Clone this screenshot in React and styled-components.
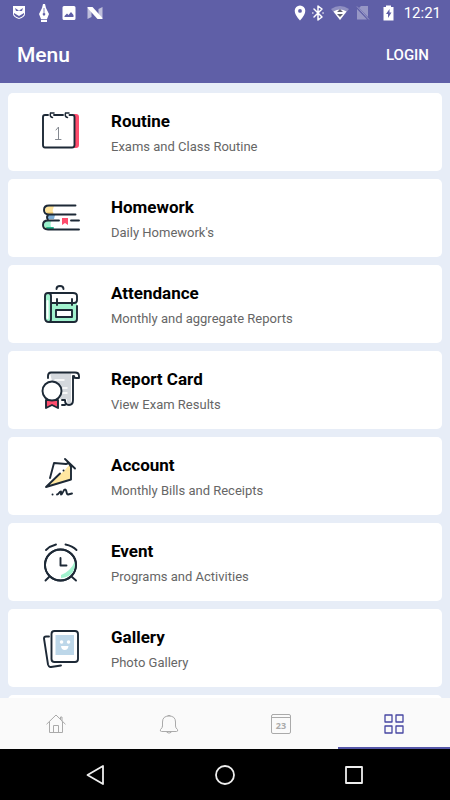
import React, { useState } from "react";
import styled, { createGlobalStyle } from "styled-components";

const GlobalStyle = createGlobalStyle`
  * {
    box-sizing: border-box;
  }

  body {
    margin: 0;
    font-family: Roboto, "Liberation Sans", sans-serif;
    background: #e7edf7;
  }

  button {
    padding: 0;
    border: 0;
    background: none;
    font-family: inherit;
    cursor: pointer;
  }
`;

const Screen = styled.div`
  display: flex;
  flex-direction: column;
  height: 100vh;
`;

const Header = styled.header`
  flex: none;
  background: #5f5fa7;
  color: #fff;
`;

const StatusBar = styled.div`
  display: flex;
  align-items: center;
  justify-content: space-between;
  height: 26px;
  padding: 0 9px 0 11px;
`;

const StatusGroup = styled.div`
  display: flex;
  align-items: center;
  gap: ${({ $gap }) => $gap}px;
`;

const Clock = styled.time`
  font-size: 15px;
  line-height: 18px;
`;

const TitleBar = styled.div`
  display: flex;
  align-items: center;
  justify-content: space-between;
  height: 57px;
  padding: 0 21px 0 17px;
`;

const Title = styled.h1`
  margin: 0;
  font-size: 21px;
  line-height: 24px;
  font-weight: 500;
`;

const Login = styled.button`
  color: #fff;
  font-size: 15px;
  line-height: 24px;
  font-weight: 500;
`;

const List = styled.main`
  flex: 1;
  min-height: 0;
  overflow: hidden;
  display: flex;
  flex-direction: column;
  gap: 8px;
  padding: 10px 8px 0;
`;

const Card = styled.a`
  flex: none;
  display: flex;
  align-items: center;
  gap: 31px;
  height: 78px;
  padding: 0 32px;
  border-radius: 5px;
  background: #fff;
  text-decoration: none;
`;

const CardBody = styled.div`
  padding-top: 4px;
`;

const CardTitle = styled.h2`
  margin: 0;
  font-size: 17px;
  line-height: 26px;
  font-weight: 700;
  color: #000;
`;

const CardText = styled.p`
  margin: 0;
  font-size: 13px;
  line-height: 26px;
  color: #666;
`;

const Tabs = styled.nav`
  flex: none;
  display: grid;
  grid-template-columns: repeat(4, 1fr);
  height: 51px;
  background: #fafafa;
`;

const Tab = styled.button`
  display: flex;
  align-items: center;
  justify-content: center;
  border-top: 2px solid transparent;
  border-bottom: 2px solid ${({ $active }) => ($active ? "#5456a8" : "transparent")};
  color: ${({ $active }) => ($active ? "#4747a3" : "#aaa")};
`;

const SystemBar = styled.div`
  flex: none;
  display: flex;
  align-items: center;
  justify-content: center;
  gap: 105px;
  height: 51px;
  background: #000;
  color: #eee;
`;

const SystemButton = styled.button`
  display: flex;
  color: inherit;
`;

const Line = styled.svg`
  display: block;
  flex: none;
  fill: none;
  stroke: ${({ $color }) => $color || "currentColor"};
  stroke-width: ${({ $weight }) => $weight || 1}px;
  stroke-linecap: round;
  stroke-linejoin: round;
`;

const Solid = styled.svg`
  display: block;
  flex: none;
  fill: currentColor;
`;

/* Card drawings share one 60 unit canvas, top is where the 40 unit window starts */
const Drawing = ({ top, children }) => (
  <Line width="40" height="40" viewBox={`10 ${top} 40 40`} $color="#1d2936" $weight={1.9} aria-hidden="true">
    {children}
  </Line>
);

const RoutineIcon = () => (
  <Drawing top={12}>
    <path d="M43 14h3q3 0 3 3v28q0 3-3 3h-5q3 0 3-3V17q0-3-1-3z" fill="#ff4d6d" stroke="none" />
    <path d="M18 15h-3q-2 0-2 2v28q0 2.500 2 2.500h27q2.500 0 2.500-2.500V17q0-2-2-2h-3M24 15h9" />
    <path d="M20.500 13q-1 4 2 4.500M21 13h3M35.500 13q-1 4 2 4.500M36 13h3" strokeWidth="1.5" />
    <path d="M26 30l2.500-3v12.500M25.500 39.500h5.500" stroke="#858a91" strokeWidth="1" />
  </Drawing>
);

const HomeworkIcon = () => (
  <Drawing top={11}>
    <path d="M24 19h-5q-4 1-4 4t4 4h4q-1-4 1-8z" fill="#ffe49b" stroke="none" />
    <path d="M25 28h-7v4h6z" fill="#7daed6" stroke="none" />
    <path d="M22 33h-5q-4 1-4 5t4 4h5q-3-5 0-9z" fill="#9bf1cd" stroke="none" />
    <path d="M17 26h6M15 41h7" stroke="#e7b853" strokeWidth="1" />
    <path d="M17 41h6" stroke="#24b58b" strokeWidth="2" />
    <path d="M45.500 18.500H19q-5 0-5 4.500t5 4.500h26.500M18 28q-2 2 0 5M29 33.500H18q-5 0-5 4.500t5 4.500h31M41 33.500h8" />
    <path d="M32 31h6v7l-3-2-3 2z" fill="#ff4d6d" stroke="none" />
  </Drawing>
);

const AttendanceIcon = () => (
  <Drawing top={11}>
    <path d="M15 21h5v27h-3q-2 0-2-3zM21 30h26v15q0 3-2 3H21z" fill="#a2f3cf" stroke="none" />
    <path d="M17.500 28v17" stroke="#fff" strokeWidth="2" />
    <path d="M26.500 16q0-3 3.500-3t3.500 3" />
    <path d="M18 20h25q4 0 4 3v4q0 3-3 3H22M21 30V23q0-3-3-3t-3 3v22q0 4 4 4h25q3 0 3-3V33M21 30v16q0 3-2 3" />
    <path d="M27 26v6M42 26v6" />
    <path d="M26 37h16v7H26z" fill="#fff" />
  </Drawing>
);

const ReportIcon = () => (
  <Drawing top={10}>
    <path d="M20 13h21v29q0 3 2 3h-3q-3 0-3-6h-7V25l-8-4z" fill="#d4d8dd" stroke="none" />
    <path d="M25 20h9M33 28h4M33 33h4" stroke="#fff" strokeWidth="1.5" />
    <path d="M18 18v-2q0-3.500 3-3.500h24q4 0 4 3.500v2h-3q-2 0-2-2M43 16v24q0 5-4 5t-4-5h-3M35 45h-3" />
    <path d="M16 40v8l6-3 6 3v-8z" fill="#ff4d6d" />
    <circle cx="22" cy="31" r="9.500" fill="#fff" />
  </Drawing>
);

const AccountIcon = () => (
  <Drawing top={10}>
    <path d="M40 18l-6 7-18 16 25-8V20z" fill="#ffe7a0" stroke="none" />
    <path d="M33 24.500L16 41l4.500-9 4-15 12 1L33 24.500z" fill="#fff" stroke="none" />
    <path d="M20 32l4-15 12 1 3-1 2 4v12.500l-25 7.500 14-13.500M35 13l10 9.500M33.500 24.500h.1" />
    <path d="M22.500 48.500h.1M27 48.500c2 0 2-3 4-3v3c2 0 2-5 4-5s1 5 3 5l4-1" />
  </Drawing>
);

const EventIcon = () => (
  <Drawing top={10}>
    <circle cx="30.500" cy="33" r="15.500" fill="#fff" />
    <path d="M45 29q1 16-14 17V43q10-4 14-14z" fill="#a2f3cf" stroke="none" />
    <circle cx="30.500" cy="33" r="15.500" />
    <path d="M30.500 26v7.500h6M16 18q4-4 10-5.500M35.500 12.500q7 1.500 11 5.500M19 45l-3.500 3.500M42 45l4 3.500" />
  </Drawing>
);

const GalleryIcon = () => (
  <Drawing top={10}>
    <path d="M19 18.500h-3q-2 0-2 2l4 26q1 3 3 2.500l10-1.500" />
    <rect x="21.500" y="13" width="26.500" height="31" rx="3" fill="#fff" />
    <path d="M25.500 17h18.500v20H25.500z" fill="#bdd7e9" stroke="none" />
    <path d="M31.500 24h.1M38.500 24h.1" stroke="#fff" strokeWidth="3.5" />
    <path d="M31 28h7.500q-.5 4-3.800 4T31 28z" fill="#fff" stroke="none" />
  </Drawing>
);

const HomeIcon = () => (
  <Line width="20" height="20" viewBox="0 0 20 20">
    <path d="M.8 10L10 1l9.200 9M3.500 8v10.500h13V8M7.500 18.500v-7h5v7M14.500 5.500V3h1.500v4" />
  </Line>
);

const BellIcon = () => (
  <Line width="20" height="20" viewBox="0 0 20 20">
    <path d="M9 1.500h2M3.500 12V8q0-6 6.500-6t6.500 6v4q0 2 2 3.500.8 2-1 2h-15q-1.800 0-1-2 2-1.500 2-3.500zM8 18.500q2 1.500 4 0" />
  </Line>
);

const CalendarText = styled.text`
  fill: currentColor;
  stroke: none;
  font: 700 9px "Open Sans", sans-serif;
  text-anchor: middle;
`;

const CalendarIcon = () => (
  <Line width="20" height="20" viewBox="0 0 20 20">
    <rect x=".5" y=".5" width="19" height="19" rx="1.500" />
    <path d="M1 3.500h18" />
    <CalendarText x="10" y="15">23</CalendarText>
  </Line>
);

const GridIcon = () => (
  <Line width="20" height="20" viewBox="0 0 20 20" $weight={1.3}>
    <path d="M1 1h7v7H1zM12 1h7v7h-7zM1 12h7v7H1zM12 12h7v7h-7z" />
  </Line>
);

const items = [
  { title: "Routine", text: "Exams and Class Routine", Icon: RoutineIcon },
  { title: "Homework", text: "Daily Homework's", Icon: HomeworkIcon },
  { title: "Attendance", text: "Monthly and aggregate Reports", Icon: AttendanceIcon },
  { title: "Report Card", text: "View Exam Results", Icon: ReportIcon },
  { title: "Account", text: "Monthly Bills and Receipts", Icon: AccountIcon },
  { title: "Event", text: "Programs and Activities", Icon: EventIcon },
  { title: "Gallery", text: "Photo Gallery", Icon: GalleryIcon },
];

const tabs = [
  { name: "Home", Icon: HomeIcon },
  { name: "Notifications", Icon: BellIcon },
  { name: "Calendar", Icon: CalendarIcon },
  { name: "Menu", Icon: GridIcon },
];

const Status = () => (
  <StatusBar>
    <StatusGroup $gap={10}>
      <Solid width="16" height="18" viewBox="0 0 16 18">
        <path fillRule="evenodd" d="M2 2h12v8q0 3-6 5-6-2-6-5zM4 4l1 3h2l1-1 1 1h2l1-3-3 2H7zM3 9v1.500q1 2 5 3.500 4-1.500 5-3.500V9l-5 3z" />
        <path d="M4 8h8v1l-4 2-4-2z" opacity=".6" />
      </Solid>
      <Solid width="14" height="20" viewBox="0 0 14 20">
        <path fillRule="evenodd" d="M6 1h2l1 4 3 6-2 5H4l-2-5 3-6zM6.600 5v5a1.300 1.300 0 1 0 .8 0V5zM4 16.800h6V19H4z" />
      </Solid>
      <Solid width="16" height="18" viewBox="0 0 16 18">
        <path fillRule="evenodd" d="M3 2h10q1.500 0 1.500 1.500v11Q14.500 16 13 16H3q-1.500 0-1.500-1.500v-11Q1.500 2 3 2zM3.500 13h9V11L10 8l-2.500 3L6 9.500 3.500 12z" />
      </Solid>
      <Solid width="16" height="18" viewBox="0 0 16 18">
        <path d="M.5 4v11l4-2V6zM15.500 14V3l-4 2v7z" opacity=".6" />
        <path d="M.5 3h5l10 11v1h-5L.5 4z" />
      </Solid>
    </StatusGroup>
    <StatusGroup $gap={6}>
      <Solid width="12" height="18" viewBox="0 0 12 18">
        <path fillRule="evenodd" d="M6 1.500a5.300 5.300 0 0 1 5.300 5.300Q11.300 11 6 16.500.7 11 .7 6.800A5.300 5.300 0 0 1 6 1.500zM6 5a1.900 1.900 0 1 0 0 3.800A1.900 1.900 0 0 0 6 5z" />
      </Solid>
      <Line width="12" height="18" viewBox="0 0 12 18" $weight={1.5}>
        <path d="M2 5l8 8-4 3V2l4 3-8 8M.8 9h.1M11 9h.1" />
      </Line>
      <Solid width="20" height="18" viewBox="0 0 20 18">
        <path d="M1 5q9-6 18 0l-9 11z" opacity=".3" />
        <path d="M3.500 7.500q6.500-4 13 0L10 16z" />
        <path d="M7 8l3-3 3 3zM7 10h6l-3 3z" fill="#5d5d70" />
      </Solid>
      <Solid width="14" height="18" viewBox="0 0 14 18" opacity=".35">
        <path d="M5 2h7v11L3 4zM1 5l10 10.500H1z" />
        <path d="M1 2.500l12 13" stroke="currentColor" strokeWidth="1" />
      </Solid>
      <Solid width="22" height="18" viewBox="-2 0 22 18">
        <path fillRule="evenodd" d="M8 1.500h5V3h2.500v13.500h-10V3H8zM11.500 5L8 10h2v4l3.500-5.500h-2z" />
      </Solid>
      <Clock>12:21</Clock>
    </StatusGroup>
  </StatusBar>
);

const App = () => {
  const [active, setActive] = useState("Menu");

  return (
    <Screen>
      <GlobalStyle />
      <Header>
        <Status />
        <TitleBar>
          <Title>Menu</Title>
          <Login type="button">LOGIN</Login>
        </TitleBar>
      </Header>
      <List>
        {items.map(({ title, text, Icon }) => (
          <Card key={title} href={`#${title.toLowerCase().replace(" ", "-")}`}>
            <Icon />
            <CardBody>
              <CardTitle>{title}</CardTitle>
              <CardText>{text}</CardText>
            </CardBody>
          </Card>
        ))}
        <Card as="div" aria-hidden="true" />
      </List>
      <Tabs>
        {tabs.map(({ name, Icon }) => (
          <Tab key={name} type="button" aria-label={name} $active={active === name} onClick={() => setActive(name)}>
            <Icon />
          </Tab>
        ))}
      </Tabs>
      <SystemBar>
        <SystemButton type="button" aria-label="Back">
          <Line width="24" height="24" viewBox="0 0 24 24" $weight={1.8}>
            <path d="M19 3v18L3.500 12z" />
          </Line>
        </SystemButton>
        <SystemButton type="button" aria-label="Home screen">
          <Line width="24" height="24" viewBox="0 0 24 24" $weight={1.8}>
            <circle cx="12" cy="12" r="9" />
          </Line>
        </SystemButton>
        <SystemButton type="button" aria-label="Recent apps">
          <Line width="24" height="24" viewBox="0 0 24 24" $weight={1.8}>
            <rect x="4" y="4" width="16" height="16" />
          </Line>
        </SystemButton>
      </SystemBar>
    </Screen>
  );
};

export default App;
